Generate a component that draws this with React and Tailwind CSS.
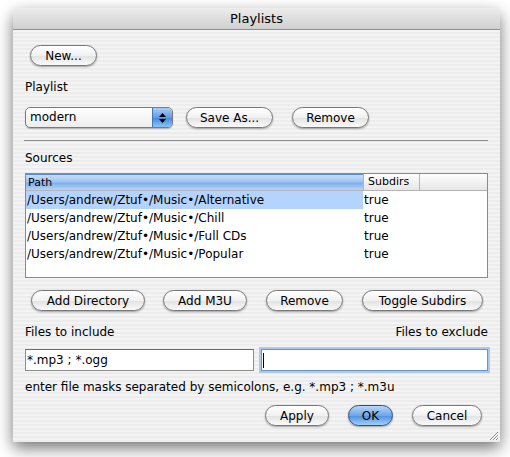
import React from "react";

const font = { fontFamily: '"DejaVu Sans", "Liberation Sans", sans-serif' };

function AquaButton({ children, className = "", primary = false }) {
  return (
    <button
      className={
        "h-[21px] rounded-full border text-[12px] leading-none text-black flex items-center justify-center shadow-[0_1px_2px_rgba(0,0,0,0.35)] " +
        (primary
          ? "border-[#2d4f86] bg-[linear-gradient(#b9d6f7_0%,#6ea6e8_50%,#4f8fdf_51%,#9fd0fb_100%)] "
          : "border-[#777] bg-[linear-gradient(#ffffff_0%,#f1f1f1_50%,#e2e2e2_51%,#fafafa_100%)] ") +
        className
      }
    >
      {children}
    </button>
  );
}

const rows = [
  "/Users/andrew/Ztuf•/Music•/Alternative",
  "/Users/andrew/Ztuf•/Music•/Chill",
  "/Users/andrew/Ztuf•/Music•/Full CDs",
  "/Users/andrew/Ztuf•/Music•/Popular",
];

export default function App() {
  return (
    <div className="w-[510px] h-[457px] bg-white pt-[8px] pl-[13px] overflow-hidden" style={font}>
      <div className="w-[487px] h-[434px] rounded-t-[7px] shadow-[0_6px_16px_rgba(0,0,0,0.55)] flex flex-col bg-[repeating-linear-gradient(0deg,#ececec_0px,#ececec_2px,#f4f4f4_2px,#f4f4f4_4px)] relative">
        <div className="h-[22px] rounded-t-[7px] border-b border-[#8f8f8f] bg-[linear-gradient(#ececec,#d0d0d0)] flex items-center justify-center text-[13px] text-black">
          Playlists
        </div>

        <div className="px-[12px] flex flex-col">
          <div className="mt-[15px] pl-[5px]">
            <AquaButton className="w-[67px]">New...</AquaButton>
          </div>

          <div className="mt-[13px] h-[16px] text-[12px] leading-[16px]">Playlist</div>

          <div className="mt-[12px] flex items-center">
            <div className="w-[148px] h-[21px] rounded-[5px] border border-[#7a7a7a] bg-[linear-gradient(#ffffff,#ededed)] flex shadow-[0_1px_1px_rgba(0,0,0,0.25)] overflow-hidden">
              <div className="flex-1 pl-[4px] text-[12px] leading-[19px]">modern</div>
              <div className="w-[20px] border-l border-[#4a76b8] bg-[linear-gradient(#a9cdf6_0%,#5f9de6_50%,#3f87dd_51%,#8cc4f8_100%)] flex flex-col items-center justify-center gap-[2px]">
                <svg width="7" height="4" viewBox="0 0 7 4"><path d="M0 4 L3.5 0 L7 4Z" fill="#000" /></svg>
                <svg width="7" height="4" viewBox="0 0 7 4"><path d="M0 0 L3.5 4 L7 0Z" fill="#000" /></svg>
              </div>
            </div>
            <AquaButton className="w-[87px] ml-[13px]">Save As...</AquaButton>
            <AquaButton className="w-[77px] ml-[19px]">Remove</AquaButton>
          </div>

          <div className="mt-[12px] h-px bg-[#8c8c8c] ml-[-1px]" />

          <div className="mt-[9px] h-[16px] text-[12px] leading-[16px]">Sources</div>

          <div className="mt-[7px] h-[105px] border border-[#8a8a8a] bg-white flex flex-col text-[12px]">
            <div className="h-[17px] flex border-b border-[#b5b5b5] text-[11px] leading-[16px]">
              <div className="w-[337px] pl-[2px] bg-[linear-gradient(#c9def8_0%,#9ec3f1_45%,#7fb0ec_55%,#b8d5f7_100%)] border-t border-[#5b8bd0]">Path</div>
              <div className="w-[57px] pl-[4px] border-l border-r border-[#b5b5b5] bg-[linear-gradient(#ffffff,#e6e6e6)]">Subdirs</div>
              <div className="flex-1 bg-[linear-gradient(#ffffff,#e6e6e6)]" />
            </div>
            {rows.map((r, i) => (
              <div key={r} className="h-[18px] flex leading-[18px]">
                <div className={"w-[337px] pl-[1px] whitespace-nowrap overflow-hidden " + (i === 0 ? "bg-[#b5d3ff]" : "")}>{r}</div>
                <div className="pl-[1px]">true</div>
              </div>
            ))}
          </div>

          <div className="mt-[12px] flex items-center pl-[6px]">
            <AquaButton className="w-[114px]">Add Directory</AquaButton>
            <AquaButton className="w-[84px] ml-[18px]">Add M3U</AquaButton>
            <AquaButton className="w-[77px] ml-[19px]">Remove</AquaButton>
            <AquaButton className="w-[121px] ml-[19px]">Toggle Subdirs</AquaButton>
          </div>

          <div className="mt-[13px] h-[16px] flex justify-between text-[12px] leading-[16px]">
            <span>Files to include</span>
            <span>Files to exclude</span>
          </div>

          <div className="mt-[9px] flex justify-between">
            <div className="w-[229px] h-[22px] border border-[#8d8d8d] border-t-[#6a6a6a] bg-white text-[12px] leading-[20px] pl-[1px]">
              *.mp3 ; *.ogg
            </div>
            <div className="w-[227px] h-[22px] border border-[#6f93c8] bg-white shadow-[0_0_0_2px_#a9c9ee] flex items-center pl-[1px]">
              <div className="w-px h-[15px] bg-black" />
            </div>
          </div>

          <div className="mt-[8px] h-[16px] text-[12px] leading-[16px] whitespace-nowrap">
            enter file masks separated by semicolons, e.g. *.mp3 ; *.m3u
          </div>

          <div className="mt-[10px] flex justify-end pr-[6px]">
            <AquaButton className="w-[64px]">Apply</AquaButton>
            <AquaButton primary className="w-[45px] ml-[19px]">OK</AquaButton>
            <AquaButton className="w-[70px] ml-[19px]">Cancel</AquaButton>
          </div>
        </div>

        <svg className="absolute right-[1px] bottom-[1px]" width="12" height="12" viewBox="0 0 12 12">
          <path d="M11 3 L3 11 M11 6 L6 11 M11 9 L9 11" stroke="#8a8a8a" strokeWidth="1" />
          <path d="M11 4 L4 11 M11 7 L7 11 M11 10 L10 11" stroke="#ffffff" strokeWidth="1" />
        </svg>
      </div>
    </div>
  );
}
